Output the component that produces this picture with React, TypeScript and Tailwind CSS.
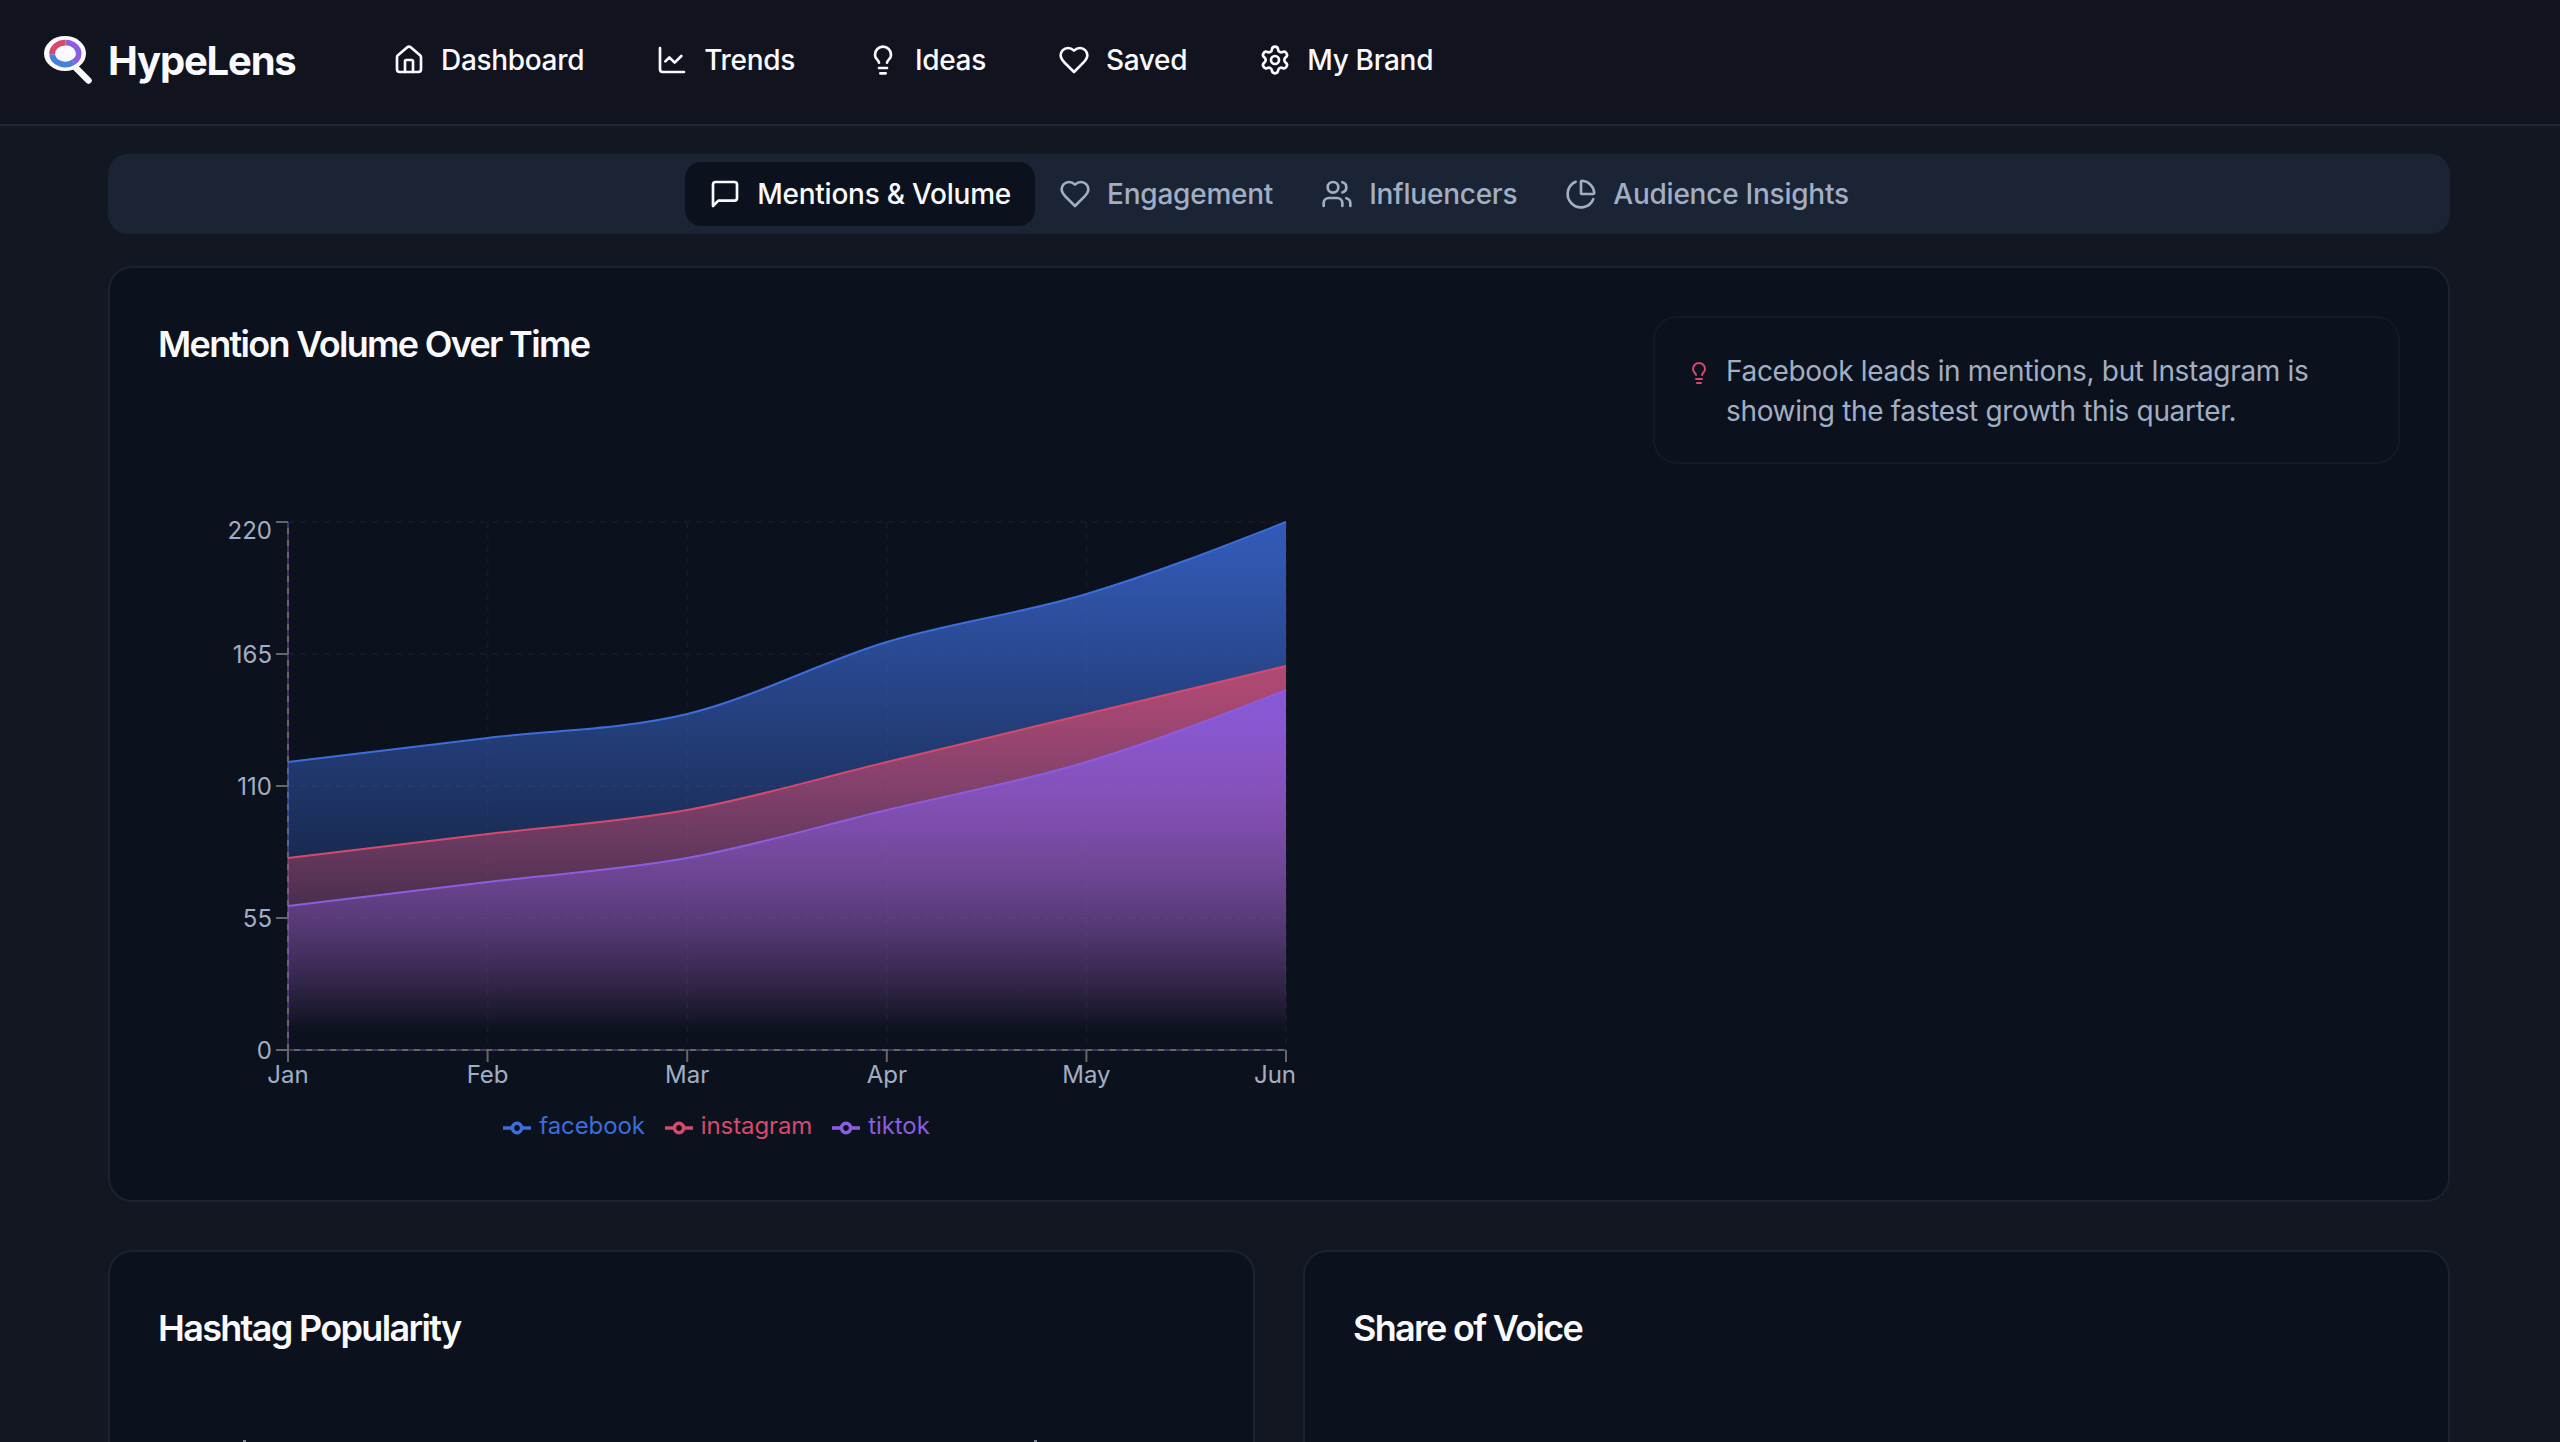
import type { ReactNode } from "react";
import { ChartLine, House, Lightbulb, Settings, Users } from "lucide-react";

const months = ["Jan", "Feb", "Mar", "Apr", "May", "Jun"];
const yTicks = [0, 55, 110, 165, 220];

const series = [
  { key: "facebook", color: "#3d6cdb", fill: "#3b6ad8", opacity: 0.8, values: [120, 130, 140, 170, 190, 220] },
  { key: "instagram", color: "#d54a6c", fill: "#d54a6c", opacity: 0.77, values: [80, 90, 100, 120, 140, 160] },
  { key: "tiktok", color: "#8b5ddf", fill: "#855ae0", opacity: 0.9, values: [60, 70, 80, 100, 120, 150] },
];

// plot area inside the chart svg
const plot = { left: 130, top: 10, width: 998, height: 528 };
const bottom = plot.top + plot.height;
const right = plot.left + plot.width;
const step = plot.width / (months.length - 1);

const xAt = (i: number) => plot.left + i * step;
const yAt = (v: number) => bottom - (v / 220) * plot.height;

// monotone cubic through evenly spaced points
function linePath(values: number[]) {
  const ys = values.map(yAt);
  const n = ys.length;
  const slopes = ys.slice(1).map((y, i) => (y - ys[i]) / step);
  const tangents = ys.map((_, i) => {
    if (i === 0 || i === n - 1) return 0;
    const a = slopes[i - 1];
    const b = slopes[i];
    const p = (a + b) / 2;
    return (
      (Math.sign(a) + Math.sign(b)) *
        Math.min(Math.abs(a), Math.abs(b), 0.5 * Math.abs(p)) || 0
    );
  });
  tangents[0] = (3 * slopes[0] - tangents[1]) / 2;
  tangents[n - 1] = (3 * slopes[n - 2] - tangents[n - 2]) / 2;

  let d = `M${xAt(0)},${ys[0]}`;
  for (let i = 1; i < n; i++) {
    const dx = step / 3;
    d += `C${xAt(i - 1) + dx},${ys[i - 1] + dx * tangents[i - 1]},${xAt(i) - dx},${ys[i] - dx * tangents[i]},${xAt(i)},${ys[i]}`;
  }
  return d;
}

function StrokeIcon({ children }: { children: ReactNode }) {
  return (
    <svg
      viewBox="0 0 24 24"
      className="size-8 shrink-0"
      fill="none"
      stroke="currentColor"
      strokeWidth="2"
      strokeLinecap="round"
      strokeLinejoin="round"
    >
      {children}
    </svg>
  );
}

function HeartIcon() {
  return (
    <StrokeIcon>
      <path d="M19 14c1.49-1.46 3-3.21 3-5.5A5.5 5.5 0 0 0 16.5 3c-1.76 0-3 .5-4.5 2-1.5-1.5-2.74-2-4.5-2A5.5 5.5 0 0 0 2 8.5c0 2.3 1.5 4.05 3 5.5l7 7Z" />
    </StrokeIcon>
  );
}

function MessageIcon() {
  return (
    <StrokeIcon>
      <path d="M21 15a2 2 0 0 1-2 2H7l-4 4V5a2 2 0 0 1 2-2h14a2 2 0 0 1 2 2z" />
    </StrokeIcon>
  );
}

function PieIcon() {
  return (
    <StrokeIcon>
      <path d="M21 12c.552 0 1.005-.449.95-.998a10 10 0 0 0-8.953-8.951c-.55-.055-.998.398-.998.95v8a1 1 0 0 0 1 1z" />
      <path d="M21.21 15.89A10 10 0 1 1 8 2.83" />
    </StrokeIcon>
  );
}

const navItems = [
  { label: "Dashboard", icon: <House className="size-8" /> },
  { label: "Trends", icon: <ChartLine className="size-8" /> },
  { label: "Ideas", icon: <Lightbulb className="size-8" /> },
  { label: "Saved", icon: <HeartIcon /> },
  { label: "My Brand", icon: <Settings className="size-8" /> },
];

const tabs = [
  { label: "Mentions & Volume", icon: <MessageIcon />, active: true },
  { label: "Engagement", icon: <HeartIcon /> },
  { label: "Influencers", icon: <Users className="size-8" /> },
  { label: "Audience Insights", icon: <PieIcon /> },
];

function Logo() {
  return (
    <svg viewBox="0 0 48 48" className="size-12" fill="none">
      <path d="M32 32L44.5 44.5" stroke="#fafafe" strokeWidth="6.5" strokeLinecap="round" />
      <ellipse cx="21" cy="17.5" rx="21" ry="17.5" fill="#fafafe" />
      <path d="M8.2 18.5A13.2 10.9 0 0 1 21.5 6.6" stroke="#d54a6c" strokeWidth="5.8" />
      <path d="M21.5 6.6A13.2 10.9 0 0 1 29.3 26.3" stroke="#8b5ddf" strokeWidth="5.8" />
      <path d="M29.3 26.3A13.2 10.9 0 0 1 8.2 18.5" stroke="#4a7fd8" strokeWidth="5.8" />
    </svg>
  );
}

function Header() {
  return (
    <header className="flex h-[126px] items-center border-b-2 border-[#212437] bg-[#11141f] pl-11 pb-1 text-[#fafafe]">
      <div className="flex w-[349px] items-center gap-4">
        <Logo />
        <span className="pt-0.5 text-[40px] font-bold tracking-[-0.03em]">HypeLens</span>
      </div>
      <nav className="flex items-center gap-[72px] text-[28px] font-medium tracking-[-0.32px]">
        {navItems.map((item) => (
          <a key={item.label} className="flex items-center gap-4">
            {item.icon}
            {item.label}
          </a>
        ))}
      </nav>
    </header>
  );
}

function TabBar() {
  return (
    <div className="flex h-20 items-center justify-center rounded-[20px] bg-[#1b2434] text-[28px] font-medium tracking-[-0.24px] text-[#a1aec4]">
      {tabs.map((tab) => (
        <button
          key={tab.label}
          className={`flex h-16 items-center gap-4 rounded-2xl px-6 ${
            tab.active ? "bg-[#0c121d] text-[#fafafe]" : ""
          }`}
        >
          {tab.icon}
          {tab.label}
        </button>
      ))}
    </div>
  );
}

type CardProps = {
  title: string;
  className: string;
  aside?: ReactNode;
  children?: ReactNode;
};

function Card({ title, className, aside, children }: CardProps) {
  return (
    <section className={`rounded-3xl border-2 border-[#1b2232] bg-[#0c121d] p-12 ${className}`}>
      <div className="flex items-start justify-between">
        <h2 className="text-4xl leading-[56px] font-semibold tracking-[-1.68px] text-[#fafafe]">
          {title}
        </h2>
        {aside}
      </div>
      {children}
    </section>
  );
}

function Insight() {
  return (
    <div className="flex h-[148px] w-[747px] gap-[15px] rounded-3xl border-2 border-[#151925] p-8 text-[28px] leading-10 tracking-[-0.34px] text-[#a1aec4]">
      <Lightbulb className="mt-[11px] size-6 shrink-0 text-[#d54a6c]" />
      <p className="pt-px">
        Facebook leads in mentions, but Instagram is
        <br />
        showing the fastest growth this quarter.
      </p>
    </div>
  );
}

function MentionChart() {
  return (
    <svg width="1138" height="640" className="mt-12 block text-2xl">
      <defs>
        {series.map((s) => (
          <linearGradient key={s.key} id={`fill-${s.key}`} x1="0" y1="0" x2="0" y2="1">
            <stop offset="5%" stopColor={s.fill} stopOpacity={s.opacity} />
            <stop offset="95%" stopColor={s.fill} stopOpacity="0" />
          </linearGradient>
        ))}
      </defs>

      <g stroke="#171a26" strokeWidth="2" strokeDasharray="6 6">
        {yTicks.map((v) => (
          <line key={v} x1={plot.left} x2={right} y1={yAt(v)} y2={yAt(v)} />
        ))}
        {months.map((m, i) => (
          <line key={m} x1={xAt(i)} x2={xAt(i)} y1={plot.top} y2={bottom} />
        ))}
      </g>

      <g strokeWidth="2">
        <path d={`M${plot.left},${plot.top}V${bottom}H${right}`} stroke="#44336f" fill="none" />
        <path d={`M${plot.left},${plot.top}V${bottom}`} stroke="#666" strokeDasharray="6 6" strokeDashoffset="6" />
        <path d={`M${plot.left},${bottom}H${right}`} stroke="#666" strokeDasharray="6 6" strokeDashoffset="6" />
        {yTicks.map((v) => (
          <line key={v} x1={plot.left - 12} x2={plot.left} y1={yAt(v)} y2={yAt(v)} stroke="#666" />
        ))}
        {months.map((m, i) => (
          <line key={m} x1={xAt(i)} x2={xAt(i)} y1={bottom} y2={bottom + 12} stroke="#666" />
        ))}
      </g>

      <g fill="#a1aec4">
        {yTicks.map((v) => (
          <text key={v} x="114" y={yAt(v) + (v === 220 ? 17 : 9)} textAnchor="end">
            {v}
          </text>
        ))}
        {months.map((m, i) => (
          <text key={m} x={m === "Jun" ? 1117 : xAt(i)} y={bottom + 33} textAnchor="middle">
            {m}
          </text>
        ))}
      </g>

      {series.map((s) => (
        <g key={s.key}>
          <path d={`${linePath(s.values)}V${bottom}H${plot.left}Z`} fill={`url(#fill-${s.key})`} />
          <path d={linePath(s.values)} fill="none" stroke={s.color} strokeWidth="2" />
        </g>
      ))}
    </svg>
  );
}

function Legend() {
  return (
    <div className="-mt-11 flex h-9 w-[1117px] items-center justify-center gap-5 text-2xl tracking-[-0.1px]">
      {series.map((s) => (
        <span key={s.key} className="flex items-center gap-2" style={{ color: s.color }}>
          <svg viewBox="0 0 32 32" className="mt-1 size-7" fill="none" stroke="currentColor" strokeWidth="4">
            <path d="M0,16h10.67A5.33,5.33,0,1,1,21.33,16H32M21.33,16A5.33,5.33,0,1,1,10.67,16" />
          </svg>
          {s.key}
        </span>
      ))}
    </div>
  );
}

export default function App() {
  return (
    <div className="h-[1442px] overflow-hidden bg-[#131721] font-['Inter',sans-serif]">
      <Header />
      <main className="ml-[108px] flex w-[2342px] flex-col pt-7">
        <TabBar />
        <Card title="Mention Volume Over Time" className="mt-8 h-[936px]" aside={<Insight />}>
          <MentionChart />
          <Legend />
        </Card>
        <div className="mt-12 grid grid-cols-2 gap-12">
          <Card title="Hashtag Popularity" className="h-[400px]">
            {/* first axis ticks of the hashtag chart */}
            <svg width="1040" height="80" className="mt-[84px] block">
              <path d="M85,1h3M876,1h3" stroke="#7c8699" strokeWidth="2" />
            </svg>
          </Card>
          <Card title="Share of Voice" className="h-[400px]" />
        </div>
      </main>
    </div>
  );
}
